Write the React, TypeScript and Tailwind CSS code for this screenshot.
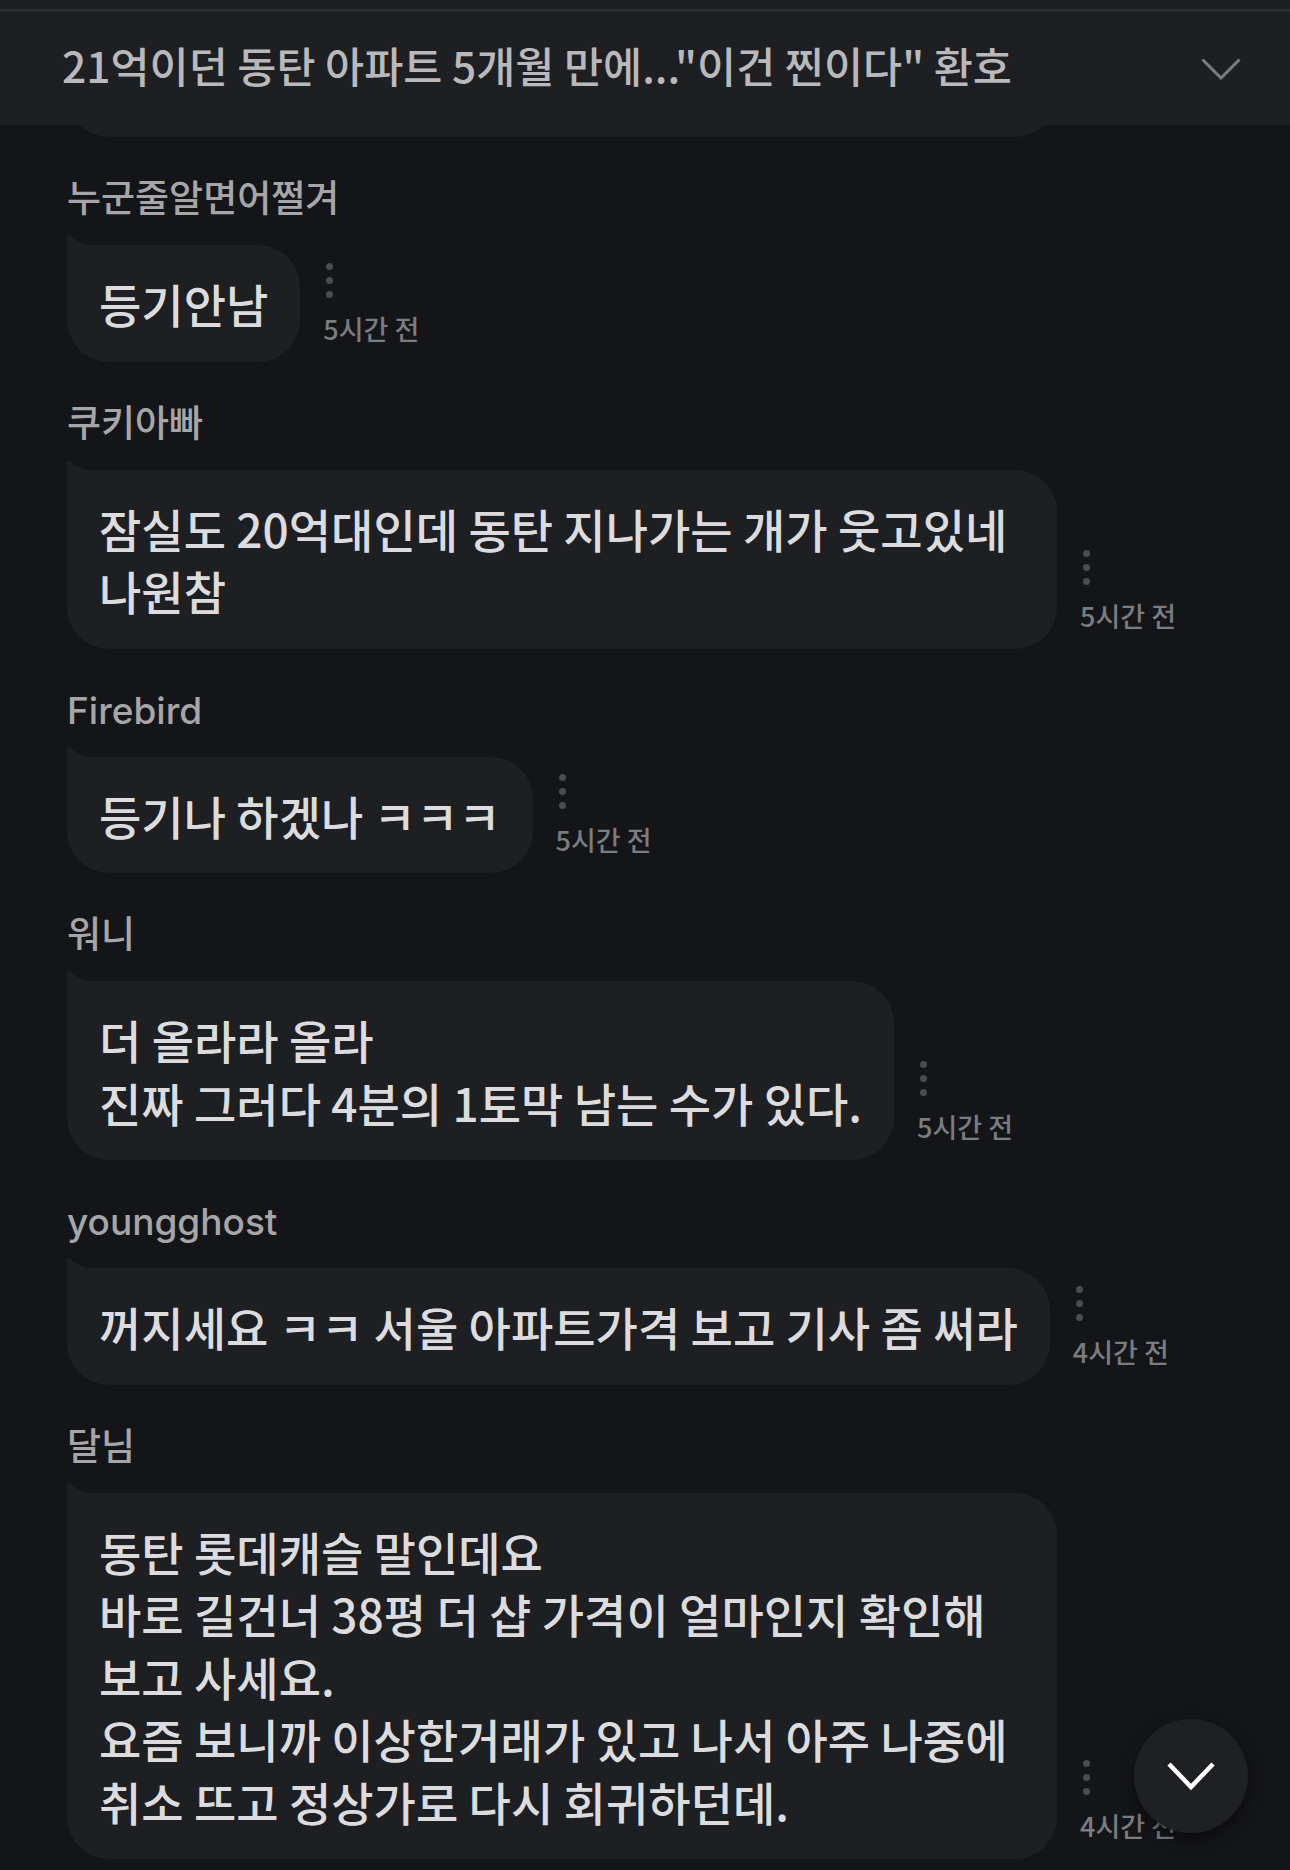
import React from "react";

type Comment = {
  name: string;
  lines: string[];
  time: string;
  full?: boolean;
};

const comments: Comment[] = [
  { name: "누군줄알면어쩔겨", lines: ["등기안남"], time: "5시간 전" },
  {
    name: "쿠키아빠",
    lines: ["잠실도 20억대인데 동탄 지나가는 개가 웃고있네", "나원참"],
    time: "5시간 전",
    full: true,
  },
  { name: "Firebird", lines: ["등기나 하겠나 ㅋㅋㅋ"], time: "5시간 전" },
  {
    name: "워니",
    lines: ["더 올라라 올라", "진짜 그러다 4분의 1토막 남는 수가 있다."],
    time: "5시간 전",
  },
  {
    name: "youngghost",
    lines: ["꺼지세요 ㅋㅋ 서울 아파트가격 보고 기사 좀 써라"],
    time: "4시간 전",
  },
  {
    name: "달님",
    lines: [
      "동탄 롯데캐슬 말인데요",
      "바로 길건너 38평 더 샵 가격이 얼마인지 확인해",
      "보고 사세요.",
      "요즘 보니까 이상한거래가 있고 나서 아주 나중에",
      "취소 뜨고 정상가로 다시 회귀하던데.",
    ],
    time: "4시간 전",
    full: true,
  },
];

const font = { fontFamily: '"Noto Sans CJK KR", "Noto Sans", sans-serif' };
const latinFont = {
  fontFamily: 'Inter, "Noto Sans CJK KR", "Noto Sans", sans-serif',
};

function Tail() {
  return (
    <svg
      className="absolute left-0 top-[-11px]"
      width="24"
      height="12"
      viewBox="0 0 24 12"
    >
      <path d="M0 12 V3 Q0 0 3 1.5 Q11 10 24 11.2 V12 Z" fill="#1e1f23" />
    </svg>
  );
}

function Dots() {
  return (
    <div className="ml-[3px] flex flex-col gap-[7px]">
      <div className="h-[7px] w-[7px] rounded-full bg-[#4b4c50]" />
      <div className="h-[7px] w-[7px] rounded-full bg-[#4b4c50]" />
      <div className="h-[7px] w-[7px] rounded-full bg-[#4b4c50]" />
    </div>
  );
}

function CommentItem({ c }: { c: Comment }) {
  return (
    <div className="mt-[41px] flex flex-col">
      <div
        className="h-[40px] whitespace-nowrap text-[37px] font-medium leading-[41px] text-[#a6a6a9]"
        style={latinFont}
      >
        {c.name}
      </div>
      <div className="mt-[27px] flex flex-row items-end gap-[23px]">
        <div
          className={
            "relative rounded-[42px] rounded-tl-none bg-[#1e1f23] px-[32px] py-[27px] text-[46px] font-medium leading-[62.5px] text-[#dcdcde] " +
            (c.full ? "w-[990px]" : "w-fit max-w-[990px]")
          }
        >
          <Tail />
          {c.lines.map((l, i) => (
            <div key={i} className="whitespace-nowrap">
              {l}
            </div>
          ))}
        </div>
        <div className="mb-[18px] flex shrink-0 flex-col items-start">
          <Dots />
          <div className="mt-[16px] whitespace-nowrap text-[27px] font-medium leading-[30px] text-[#7b7c80]">
            {c.time}
          </div>
        </div>
      </div>
    </div>
  );
}

export default function App() {
  return (
    <div
      className="relative h-[1870px] w-[1290px] overflow-hidden bg-[#141518]"
      style={font}
    >
      {/* Header */}
      <div className="flex flex-col">
        <div className="h-[9px] bg-[#1e1f23]" />
        <div className="h-[3px] bg-[#2b2c30]" />
        <div className="flex h-[113px] items-center justify-between bg-[#1e1f23] pl-[62px] pr-[49px]">
          <div className="mb-[8px] whitespace-nowrap text-[42.5px] font-medium leading-[48px] text-[#b9b9bc]">
            21억이던 동탄 아파트 5개월 만에..."이건 찐이다" 환호
          </div>
          <svg width="40" height="22" viewBox="0 0 40 22" fill="none">
            <polyline
              points="1.5,1.5 20,20 38.5,1.5"
              stroke="#7b7c80"
              strokeWidth="3"
            />
          </svg>
        </div>
      </div>

      {/* Comments */}
      <div className="flex flex-col pl-[67px]">
        <div className="flex h-[12px] w-[990px] items-end overflow-hidden">
          <div className="h-[90px] w-[990px] rounded-[42px] bg-[#1e1f23]" />
        </div>
        {comments.map((c, i) => (
          <CommentItem key={i} c={c} />
        ))}
      </div>

      {/* Floating scroll-down button */}
      <div className="absolute left-[1134px] top-[1719px] flex h-[114px] w-[114px] items-center justify-center rounded-full bg-[#1f2024] shadow-[0_6px_16px_rgba(0,0,0,0.45)]">
        <svg width="50" height="30" viewBox="0 0 50 30" fill="none">
          <polyline
            points="3,3 25,26 47,3"
            stroke="#ffffff"
            strokeWidth="4.5"
          />
        </svg>
      </div>
    </div>
  );
}
